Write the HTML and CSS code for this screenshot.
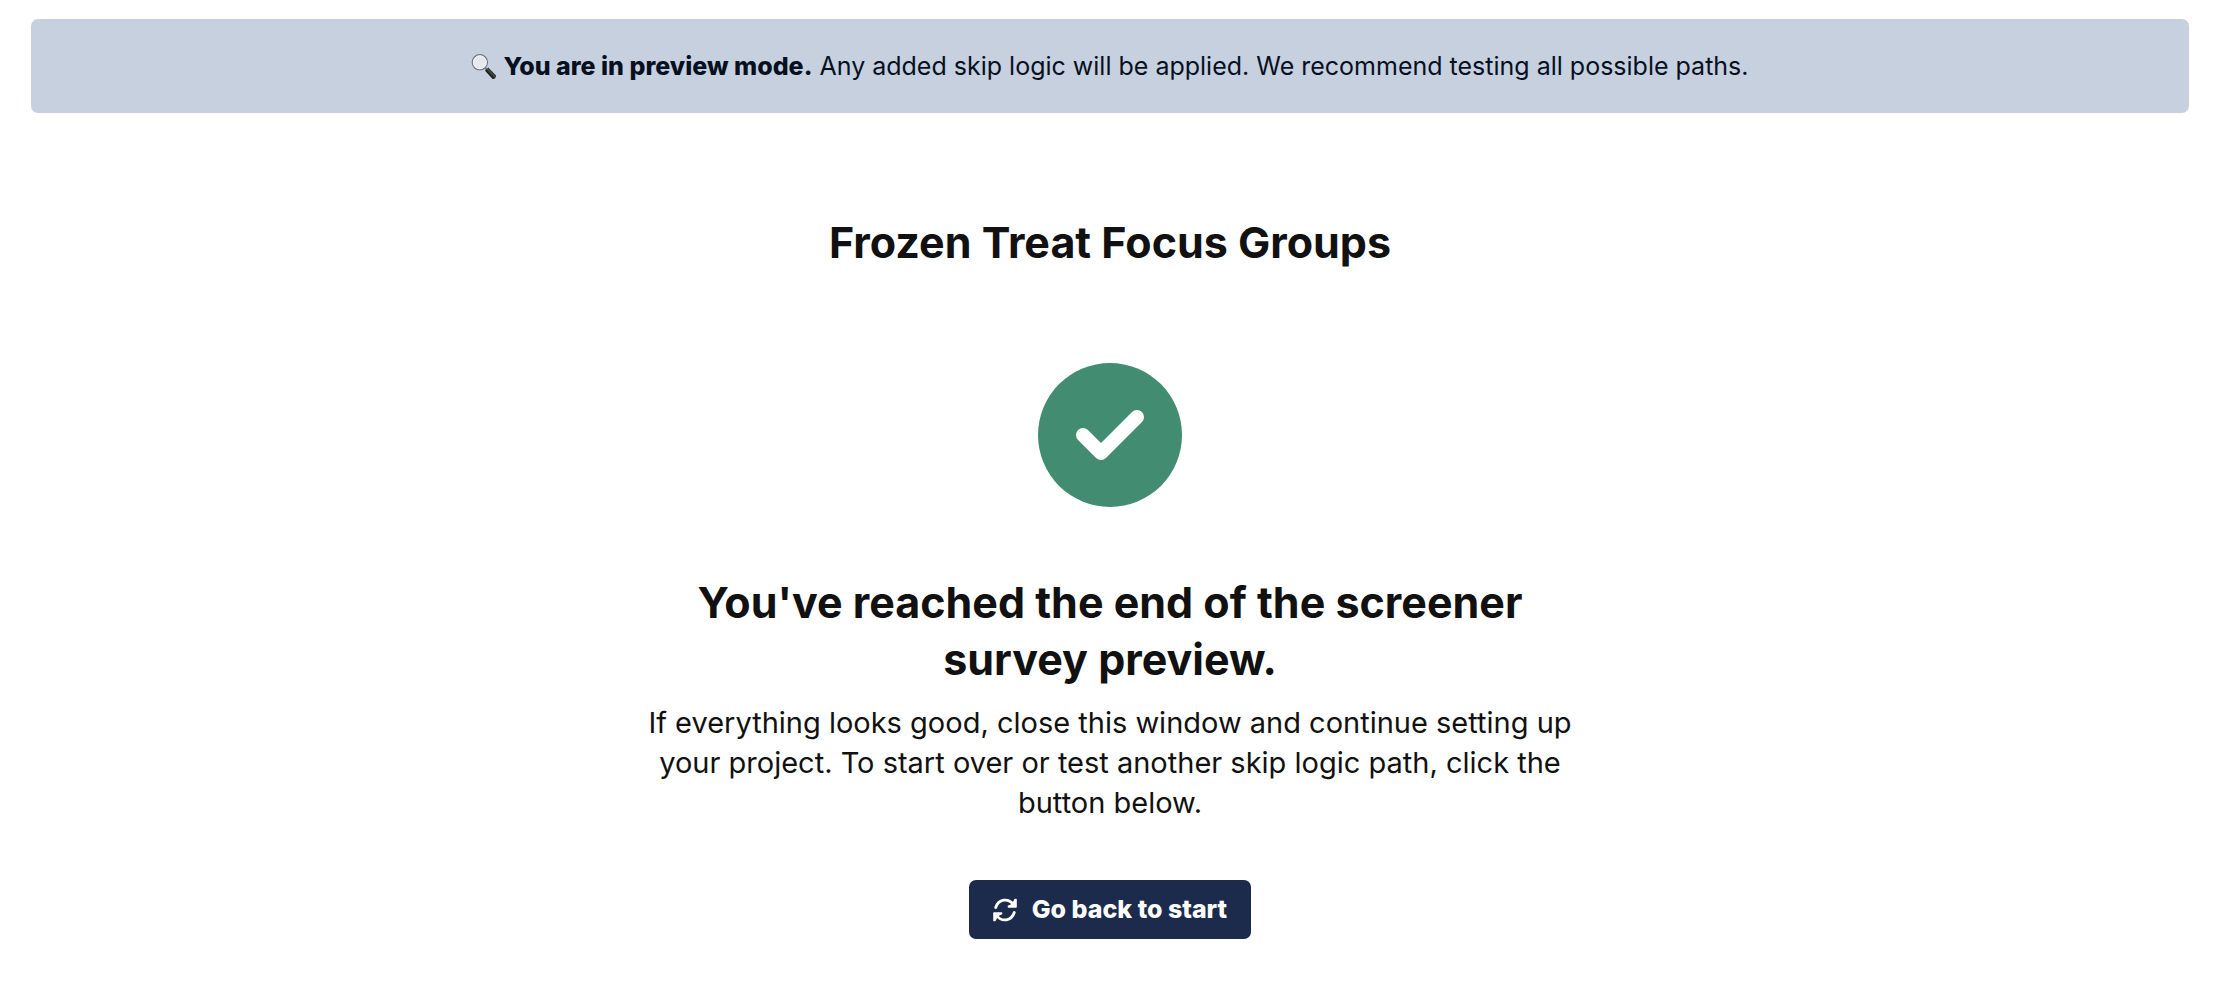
FILE: index.html
```html
<!DOCTYPE html>
<html lang="en">
<head>
    <meta charset="UTF-8">
    <meta name="viewport" content="width=device-width, initial-scale=1.0">
    <title>Frozen Treat Focus Groups</title>
    <link rel="stylesheet" href="styles.css">
</head>
<body>
    <div class="preview-banner">
        <svg class="search-icon" viewBox="0 0 24 24" aria-hidden="true">
            <defs>
                <linearGradient id="handle" x1="0" y1="1" x2="1" y2="0">
                    <stop offset="0.35" stop-color="#080808"/>
                    <stop offset="0.55" stop-color="#4a4a4a"/>
                    <stop offset="0.7" stop-color="#111111"/>
                </linearGradient>
            </defs>
            <path d="M13.500 13.500l3 3" stroke="#777777" stroke-width="2"/>
            <path d="M13.500 16l3-3 7.300 7.500c1 1.500-1.700 4.300-3.200 3.300z" fill="url(#handle)"/>
            <circle cx="8.500" cy="8" r="7.300" fill="#e6e9ee" stroke="#707780" stroke-width="1.200"/>
            <circle cx="8.500" cy="8" r="6.200" fill="none" stroke="#f7f8fa" stroke-width="0.800"/>
        </svg>
        <p><strong>You are in preview mode.</strong> Any added skip logic will be applied. We recommend testing all possible paths.</p>
    </div>

    <main class="screener">
        <h1>Frozen Treat Focus Groups</h1>
        <svg class="check-icon" viewBox="0 0 144 144" aria-hidden="true">
            <circle cx="72" cy="72" r="72" fill="#428c72"/>
            <path d="M45 72l18 18 36-36" fill="none" stroke="#ffffff" stroke-width="14" stroke-linecap="round" stroke-linejoin="round"/>
        </svg>
        <h2>You've reached the end of the screener survey preview.</h2>
        <p class="message">If everything looks good, close this window and continue setting up your project. To start over or test another skip logic path, click the button below.</p>
        <button type="button" class="restart-button">
            <svg class="refresh-icon" viewBox="0 0 24 24" aria-hidden="true">
                <g fill="none" stroke="#ffffff" stroke-width="2.800" stroke-linecap="round" stroke-linejoin="round">
                    <path d="M2.700 9.500C5.500 1 15 -0.500 20.500 6.500"/>
                    <path d="M21.300 14.500C18.500 23 9 24.500 3.500 17.500"/>
                </g>
                <g fill="#ffffff" stroke="#ffffff" stroke-width="1.600" stroke-linejoin="round">
                    <path d="M23 1.500V9H15.500v-0.800l4-1.700L22.200 1.500z"/>
                    <path d="M1 22.500V15H8.500v0.800l-4 1.700L1.800 22.500z"/>
                </g>
            </svg>
            Go back to start
        </button>
    </main>
</body>
</html>
```

FILE: styles.css
```css
:root {
    --banner-bg: #c7d0df;
    --banner-text: #06101f;
    --text-dark: #111111;
    --button-bg: #1c2b4b;
}

body {
    font-family: 'Inter', sans-serif;
    background-color: #ffffff;
    color: var(--text-dark);
    margin: 0;
    padding: 19px 43px 40px 31px;
    box-sizing: border-box;
}

h1,
h2,
p {
    margin: 0;
}

.preview-banner {
    display: flex;
    justify-content: center;
    align-items: center;
    gap: 7px;
    padding: 28px;
    border-radius: 7px;
    background-color: var(--banner-bg);
    color: var(--banner-text);
    font-size: 25px;
    line-height: 38px;
}

.preview-banner strong {
    font-weight: 800;
}

.search-icon {
    width: 25px;
    height: 25px;
    flex-shrink: 0;
}

.screener {
    display: flex;
    flex-direction: column;
    align-items: center;
    max-width: 940px;
    margin: 101px auto 0;
    text-align: center;
}

h1,
h2 {
    font-size: 43px;
    font-weight: 700;
    line-height: 57px;
}

.check-icon {
    width: 144px;
    height: 144px;
    margin: 92px 0 67px;
}

.message {
    margin-top: 15px;
    font-size: 29px;
    line-height: 40px;
}

.restart-button {
    display: flex;
    align-items: center;
    gap: 15px;
    margin-top: 57px;
    padding: 14px 24px;
    border: none;
    border-radius: 7px;
    background-color: var(--button-bg);
    color: #ffffff;
    font-family: inherit;
    font-size: 25px;
    font-weight: 800;
    line-height: 31px;
    cursor: pointer;
}

.restart-button:hover {
    background-color: #2a3d66;
}

.refresh-icon {
    width: 24px;
    height: 24px;
}
```
